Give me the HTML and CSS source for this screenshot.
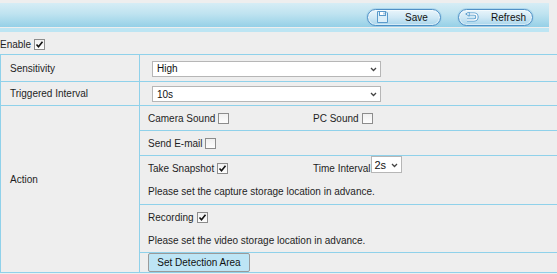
FILE: index.html
```html
<!DOCTYPE html>
<html>
<head>
<meta charset="utf-8">
<link rel="stylesheet" href="styles.css">
</head>
<body>
<div class="toolbar">
  <button class="tbtn save">
    <svg class="ico" width="11" height="12" viewBox="0 0 11 12"><path d="M0.5 0.5 H9 L10.5 2 V11.5 H0.5 Z" fill="#dceff9" stroke="#5a9acb"/><rect x="2.5" y="0.5" width="6" height="4" fill="#fff" stroke="#5a9acb"/><rect x="6.5" y="1.5" width="1" height="2" fill="#5a9acb"/></svg>
    <span class="tlabel">Save</span>
  </button>
  <button class="tbtn refresh">
    <svg class="ico" width="14" height="10" viewBox="0 0 14 10"><path d="M3.5 2 H9 A3 3 0 0 1 9 8 H2" fill="none" stroke="#5197ca" stroke-width="3.2"/><path d="M3.5 2 H9 A3 3 0 0 1 9 8 H2" fill="none" stroke="#fff" stroke-width="1.4"/><path d="M0.7 2 L4.2 -0.2 V4.2 Z" fill="#fff" stroke="#5197ca" stroke-width="0.9" stroke-linejoin="round"/></svg>
    <span class="tlabel">Refresh</span>
  </button>
</div>
<div class="stripe"></div>
<div class="enable">Enable <span class="cb"><svg width="9" height="9" viewBox="0 0 9 9"><path d="M1.5 4.5 L3.5 6.8 L7.5 1.8" fill="none" stroke="#111" stroke-width="1.6"/></svg></span></div>
<div class="grid">
  <div class="cell label">Sensitivity</div>
  <div class="cell val">
    <span class="sel wide"><select><option>High</option></select><svg class="chev" width="7" height="5" viewBox="0 0 7 5"><path d="M1 1 L3.5 3.5 L6 1" fill="none" stroke="#444" stroke-width="1.3"/></svg></span>
  </div>
  <div class="cell label">Triggered Interval</div>
  <div class="cell val">
    <span class="sel wide"><select><option>10s</option></select><svg class="chev" width="7" height="5" viewBox="0 0 7 5"><path d="M1 1 L3.5 3.5 L6 1" fill="none" stroke="#444" stroke-width="1.3"/></svg></span>
  </div>
  <div class="cell label action">Action</div>
  <div class="cell sub">
    <div class="line two">
      <span class="item">Camera Sound <span class="cb"></span></span>
      <span class="item">PC Sound <span class="cb"></span></span>
    </div>
  </div>
  <div class="cell sub">
    <div class="line">
      <span class="item">Send E-mail <span class="cb"></span></span>
    </div>
  </div>
  <div class="cell sub">
    <div class="line two">
      <span class="item">Take Snapshot <span class="cb"><svg width="9" height="9" viewBox="0 0 9 9"><path d="M1.5 4.5 L3.5 6.8 L7.5 1.8" fill="none" stroke="#111" stroke-width="1.6"/></svg></span></span>
      <span class="item top">Time Interval<span class="sel small"><select><option>2s</option></select><svg class="chev" width="7" height="5" viewBox="0 0 7 5"><path d="M1 1 L3.5 3.5 L6 1" fill="none" stroke="#444" stroke-width="1.3"/></svg></span></span>
    </div>
    <div class="line">Please set the capture storage location in advance.</div>
  </div>
  <div class="cell sub">
    <div class="line">
      <span class="item">Recording <span class="cb"><svg width="9" height="9" viewBox="0 0 9 9"><path d="M1.5 4.5 L3.5 6.8 L7.5 1.8" fill="none" stroke="#111" stroke-width="1.6"/></svg></span></span>
    </div>
    <div class="line">Please set the video storage location in advance.</div>
  </div>
  <div class="cell sub last">
    <button class="area">Set Detection Area</button>
  </div>
</div>
</body>
</html>
```

FILE: styles.css
```css
html, body {
  margin: 0;
  padding: 0;
}
body {
  background: #eeeeee;
  font-family: "Liberation Sans", Arial, sans-serif;
  font-size: 10px;
  color: #1e1e1e;
  overflow: hidden;
  width: 557px;
  height: 274px;
}
.toolbar {
  margin-top: 3px;
  width: 533px;
  height: 24px;
  padding-right: 16px;
  background: linear-gradient(#d6edf5, #bfe3f0 45%, #95d0e7);
  display: flex;
  justify-content: flex-end;
  align-items: center;
  gap: 17px;
}
.tbtn {
  height: 17px;
  margin-top: 6px;
  margin-bottom: 2px;
  border: 1px solid #4f90c6;
  border-radius: 9px;
  background: linear-gradient(#e9f5fb, #cfe8f5 50%, #a9d6ec);
  box-shadow: 0 0 0 1px rgba(150,200,230,0.55), inset 0 0 0 1px rgba(255,255,255,0.5);
  padding: 0;
  display: flex;
  align-items: center;
  font-family: "Liberation Sans", Arial, sans-serif;
  font-size: 10px;
  color: #111;
}
.save { width: 74px; }
.save .ico { margin-left: 9px; }
.save .tlabel { margin-left: 17px; }
.refresh { width: 75px; }
.refresh .ico { margin-left: 6px; }
.refresh .tlabel { margin-left: 12px; }
.ico { display: block; flex: none; }
.stripe {
  width: 549px;
  height: 4px;
  margin-top: 1px;
  background: #bde5f3;
}
.enable {
  margin-top: 6px;
  height: 13px;
  display: flex;
  align-items: center;
  gap: 3px;
}
.cb {
  display: inline-flex;
  align-items: center;
  justify-content: center;
  width: 11px;
  height: 11px;
  box-sizing: border-box;
  border: 1px solid #8c8c8c;
  background: linear-gradient(#f0f0f0, #fdfdfd);
  vertical-align: middle;
  flex: none;
}
.cb svg { display: block; }
.grid {
  margin-top: 3px;
  width: 560px;
  display: grid;
  grid-template-columns: 138px 1fr;
  grid-template-rows: 26px 23px 24px 24px 48px 47px 19px;
  gap: 1px;
  padding: 1px 0 1px 1px;
  background: #8fd1ea;
}
.cell {
  background: #eeeeee;
}
.label {
  display: flex;
  align-items: center;
  padding-left: 9px;
}
.action {
  grid-row: 3 / 8;
  padding-bottom: 19px;
}
.val {
  display: flex;
  align-items: center;
  padding-left: 12px;
  padding-top: 1px;
}
.sel {
  position: relative;
  display: inline-block;
}
.sel select {
  appearance: none;
  -webkit-appearance: none;
  display: block;
  box-sizing: border-box;
  background: #fff;
  border: 1px solid #b6b6b6;
  border-radius: 0;
  font-family: "Liberation Sans", Arial, sans-serif;
  font-size: 10px;
  color: #111;
  margin: 0;
}
.sel .chev {
  position: absolute;
  top: 50%;
  margin-top: -2px;
  pointer-events: none;
}
.wide select {
  width: 229px;
  height: 16px;
  padding: 0 0 0 4px;
}
.wide .chev { right: 4px; }
.small select {
  width: 31px;
  height: 17px;
  padding: 0 0 0 2px;
  font-size: 11px;
}
.small .chev { right: 4px; }
.sub {
  padding-left: 8px;
  display: flex;
  flex-direction: column;
}
.line {
  height: 24px;
  display: flex;
  align-items: center;
  flex: none;
}
.sub .line + .line { height: 23px; }
.two .item:first-child { width: 165px; }
.item {
  display: flex;
  align-items: center;
  gap: 3px;
}
.item.top {
  gap: 1px;
  align-self: flex-start;
  height: 24px;
}
.item.top .sel {
  align-self: flex-start;
}
.last {
  justify-content: flex-start;
}
.area {
  height: 19px;
  width: 102px;
  box-sizing: border-box;
  border: 1px solid #9a9a9a;
  border-radius: 2px;
  background: #bde5f5;
  font-family: "Liberation Sans", Arial, sans-serif;
  font-size: 10px;
  color: #111;
  padding: 0;
  margin: 0;
}
```
